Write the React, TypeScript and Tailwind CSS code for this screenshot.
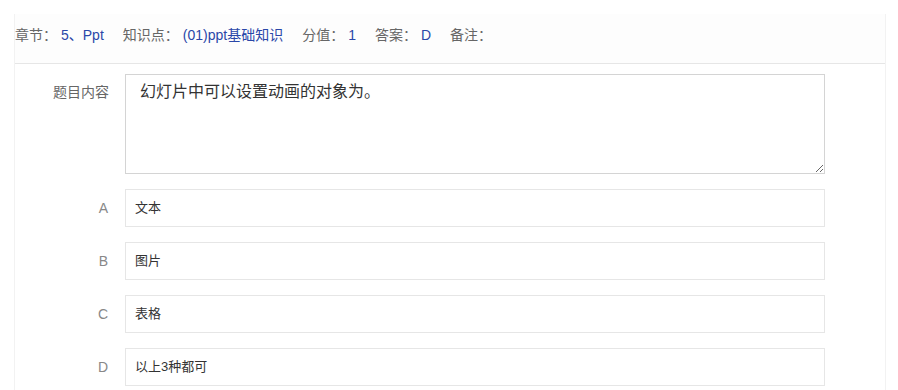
const META = [
  { label: '章节：', value: '5、Ppt' },
  { label: '知识点：', value: '(01)ppt基础知识' },
  { label: '分值：', value: '1' },
  { label: '答案：', value: 'D' },
  { label: '备注：', value: '' },
]

const OPTIONS = [
  { key: 'A', text: '文本' },
  { key: 'B', text: '图片' },
  { key: 'C', text: '表格' },
  { key: 'D', text: '以上3种都可' },
]

export default function App() {
  return (
    <div
      className="h-[390px] w-[898px] overflow-hidden bg-white pl-[14px] pt-[14px]"
      style={{ fontFamily: '"Liberation Sans", "Noto Sans CJK SC", sans-serif' }}
    >
      <div className="h-[400px] w-[872px] border-x border-[#f2f2f2]">
        <div className="flex h-[50px] items-start border-b border-[#e6e6e6] bg-[#fdfdfd] pt-[11px] text-[14px] leading-5">
          {META.map((m) => (
            <div key={m.label} className="mr-[19px] flex gap-1">
              <span className="text-[#666]">{m.label}</span>
              {m.value && <span className="text-[#2a47a8]">{m.value}</span>}
            </div>
          ))}
        </div>

        <div className="pt-[10px]">
          <div className="mb-[15px] flex">
            <div className="w-[95px] pr-px pt-[8px] text-right text-[14px] leading-5 text-[#666]">
              题目内容
            </div>
            <textarea
              readOnly
              defaultValue="幻灯片中可以设置动画的对象为。"
              className="ml-[15px] h-[100px] w-[700px] resize-y border border-[#d4d4d4] px-[14px] pt-[7px] text-[16px] leading-5 text-[#333] outline-none"
            />
          </div>

          {OPTIONS.map((o) => (
            <div key={o.key} className="mb-[15px] flex items-center">
              <div className="w-[95px] pr-[2px] text-right text-[14px] text-[#888]">{o.key}</div>
              <div className="ml-[15px] flex h-[38px] w-[700px] items-center border border-[#e6e6e6] pl-[9px] text-[13px] text-[#333]">
                {o.text}
              </div>
            </div>
          ))}
        </div>
      </div>
    </div>
  )
}
